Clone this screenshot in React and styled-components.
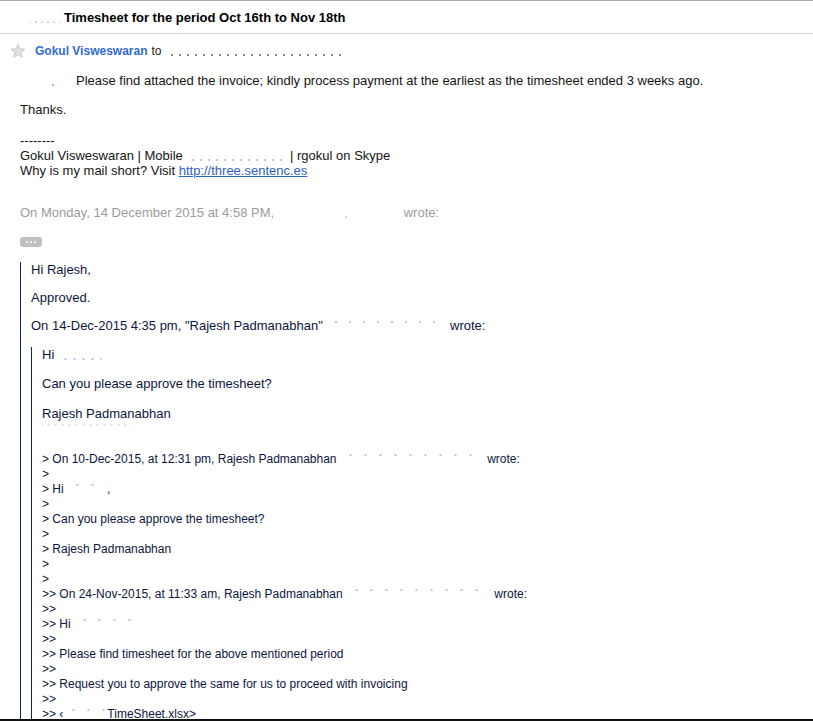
import React from "react";
import styled, { createGlobalStyle } from "styled-components";

const GlobalStyle = createGlobalStyle`
  html, body {
    margin: 0;
    padding: 0;
    background: #fff;
  }
  body {
    font-family: "Liberation Sans", Arial, Helvetica, sans-serif;
    color: #141414;
  }
`;

const Page = styled.div`
  width: 813px;
  height: 721px;
  box-sizing: border-box;
  overflow: hidden;
  border-top: 1px solid #ababab;
  border-bottom: 2px solid #111;
`;

const SubjectBar = styled.div`
  height: 32px;
  display: flex;
  align-items: center;
  padding-left: 30px;
  border-bottom: 1px solid #d6d6d6;
`;

const Subject = styled.span`
  font-size: 13px;
  font-weight: bold;
  color: #000;
  margin-left: 4px;
`;

const SenderRow = styled.div`
  display: flex;
  align-items: center;
  padding: 9px 0 0 10px;
  line-height: 15px;
  font-size: 12px;
`;

const Star = styled.svg`
  width: 16px;
  height: 16px;
  margin-right: 9px;
  flex-shrink: 0;
`;

const Sender = styled.span`
  font-weight: bold;
  color: #2f6bd3;
`;

const To = styled.span`
  color: #222;
  margin-left: 4px;
  white-space: pre;
`;

/* redacted stretch: an empty gap with a few faint marks left over */
const Blank = styled.span`
  display: inline-block;
  width: ${(p) => p.$w}px;
  height: 12px;
  vertical-align: -1px;
  background-image: radial-gradient(
    circle,
    ${(p) => p.$color || "#bccaee"} 0.9px,
    transparent 1.4px
  );
  background-size: ${(p) => p.$step || 13}px 4px;
  background-repeat: repeat-x;
  background-position: 3px ${(p) => (p.$bottom ? "9px" : "1px")};
`;

const Body = styled.div`
  padding: 0 20px;
  font-size: 13px;
  line-height: 15px;
`;

const Para = styled.p`
  margin: ${(p) => p.$top ?? 14}px 0 0;
  color: ${(p) => p.$color || "inherit"};
  white-space: nowrap;
`;

const Link = styled.a`
  color: #2c61c6;
  text-decoration: underline;
`;

const MoreButton = styled.div`
  margin-top: 17px;
  width: 22px;
  height: 10px;
  border-radius: 3px;
  background: #c0c0c0;
  display: flex;
  align-items: center;
  justify-content: center;
  gap: 2px;
`;

const Dot = styled.span`
  width: 2px;
  height: 2px;
  border-radius: 50%;
  background: #fff;
`;

const Quote = styled.blockquote`
  margin: ${(p) => p.$top}px 0 0;
  padding-left: 10px;
  border-left: 1px solid #0d2466;
  color: #0c1640;
`;

const QuotedLines = styled.div`
  margin-top: 16px;
  font-size: 12px;
  line-height: 15px;
  white-space: pre;
`;

const quoted = [
  ["> On 10-Dec-2015, at 12:31 pm, Rajesh Padmanabhan ", 144, " wrote:"],
  [">"],
  ["> Hi ", 40, ","],
  [">"],
  ["> Can you please approve the timesheet?"],
  [">"],
  ["> Rajesh Padmanabhan"],
  ["> ", 6],
  [">"],
  [">> On 24-Nov-2015, at 11:33 am, Rajesh Padmanabhan ", 145, " wrote:"],
  [">>"],
  [">> Hi ", 60],
  [">>"],
  [">> Please find timesheet for the above mentioned period"],
  [">>"],
  [">> Request you to approve the same for us to proceed with invoicing"],
  [">>"],
  [">> ‹", 44, "TimeSheet.xlsx>"],
];

export default function App() {
  return (
    <Page>
      <GlobalStyle />
      <SubjectBar>
        <Blank $w={30} $color="#d8d8d8" $step={6} $bottom />
        <Subject>Timesheet for the period Oct 16th to Nov 18th</Subject>
      </SubjectBar>

      <SenderRow>
        <Star viewBox="0 0 24 24">
          <polygon
            points="12,1.5 14.9,8.6 22.5,9.2 16.7,14.1 18.5,21.5 12,17.5 5.5,21.5 7.3,14.1 1.5,9.2 9.1,8.6"
            fill="#e2e2e2"
            stroke="#b9b9b9"
            strokeWidth="1"
          />
        </Star>
        <Sender>Gokul Visweswaran</Sender>
        <To>
          to <Blank $w={180} $color="#8a8a8a" $step={8} $bottom />
        </To>
      </SenderRow>

      <Body>
        <Para>
          <Blank $w={56} $color="#d9a08c" $step={60} $bottom />
          Please find attached the invoice; kindly process payment at the earliest as
          the timesheet ended 3 weeks ago.
        </Para>
        <Para>Thanks.</Para>
        <Para $top={16}>
          --------
          <br />
          Gokul Visweswaran | Mobile <Blank $w={100} $color="#c8c8e0" $step={8} $bottom /> |
          rgokul on Skype
          <br />
          Why is my mail short? Visit <Link href="#">http://three.sentenc.es</Link>
        </Para>
        <Para $top={27} $color="#9c9c9c">
          On Monday, 14 December 2015 at 4:58 PM, <Blank $w={126} $color="#d8d8d8" $step={130} $bottom />
          wrote:
        </Para>
        <MoreButton>
          <Dot />
          <Dot />
          <Dot />
        </MoreButton>

        <Quote $top={15}>
          <Para $top={0}>Hi Rajesh,</Para>
          <Para $top={13}>Approved.</Para>
          <Para $top={13}>
            On 14-Dec-2015 4:35 pm, "Rajesh Padmanabhan" <Blank $w={120} $step={14} /> wrote:
          </Para>

          <Quote $top={14}>
            <Para $top={0}>
              Hi <Blank $w={44} $step={9} $bottom />
            </Para>
            <Para>Can you please approve the timesheet?</Para>
            <Para $top={15}>
              Rajesh Padmanabhan
              <br />
              <Blank $w={90} $color="#e0e0e8" $step={7} />
            </Para>
            <QuotedLines>
              {quoted.map(([a, w, b], i) => (
                <div key={i}>
                  {a}
                  {w ? <Blank $w={w} $step={15} /> : null}
                  {b}
                </div>
              ))}
            </QuotedLines>
          </Quote>
        </Quote>
      </Body>
    </Page>
  );
}
